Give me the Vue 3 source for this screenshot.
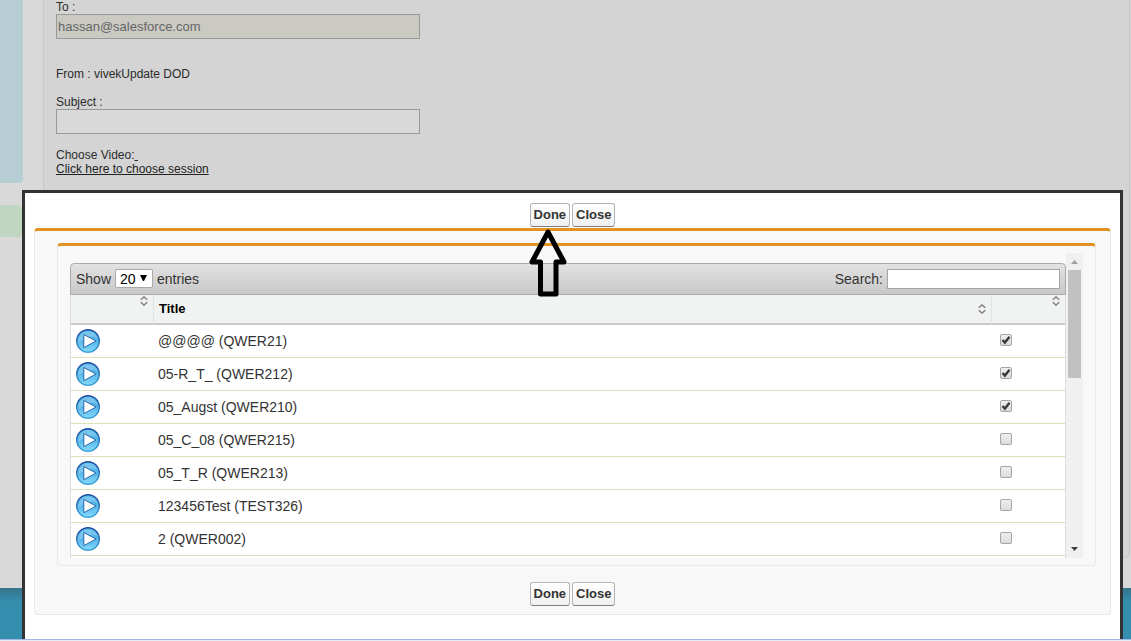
<script setup>
import { ref } from 'vue'

const email = ref('hassan@salesforce.com')
const subject = ref('')
const search = ref('')
const pageSize = ref('20')
const sessions = ref([
  { title: '@@@@ (QWER21)', selected: true },
  { title: '05-R_T_ (QWER212)', selected: true },
  { title: '05_Augst (QWER210)', selected: true },
  { title: '05_C_08 (QWER215)', selected: false },
  { title: '05_T_R (QWER213)', selected: false },
  { title: '123456Test (TEST326)', selected: false },
  { title: '2 (QWER002)', selected: false }
])
</script>

<template>
  <div class="page">
    <div class="columns">
      <aside class="side">
        <div class="side-box blue"></div>
        <div class="side-box green"></div>
      </aside>
      <main class="card">
        <div class="field">
          <label for="to">To :</label>
          <input id="to" v-model="email" class="filled" type="text" readonly />
        </div>
        <p class="from">From : vivekUpdate DOD</p>
        <div class="field">
          <label for="subject">Subject :</label>
          <input id="subject" v-model="subject" type="text" />
        </div>
        <p class="choose">Choose Video:<a href="#">&nbsp;<br />Click here to choose session</a></p>
      </main>
    </div>
    <footer class="footer"></footer>

    <section class="modal" role="dialog" aria-label="Choose session">
      <div class="actions top">
        <button type="button">Done</button>
        <button type="button">Close</button>
      </div>
      <div class="panel outer">
        <div class="panel inner">
          <div class="scroller">
            <div class="grid">
              <div class="toolbar">
                <label class="length">
                  Show
                  <span class="select">
                    <select v-model="pageSize">
                      <option>20</option>
                      <option>50</option>
                    </select>
                    <svg viewBox="0 0 7 6" width="7" height="6"><path d="M0 0h7L4 6H3z" fill="#000" /></svg>
                  </span>
                  entries
                </label>
                <label class="search">Search: <input v-model="search" type="text" /></label>
              </div>
              <table>
                <colgroup>
                  <col class="c-play" />
                  <col />
                  <col class="c-check" />
                </colgroup>
                <thead>
                  <tr>
                    <th v-for="(name, i) in ['', 'Title', '']" :key="i">
                      <div class="head" :class="{ raised: !name }">
                        <span>{{ name }}</span>
                        <svg viewBox="0 0 8 10" width="8" height="10" fill="none" stroke="#858585" stroke-width="1.5">
                          <path d="M.7 3.8L4 .9l3.300 2.900M.7 6.200L4 9.100l3.300-2.900" />
                        </svg>
                      </div>
                    </th>
                  </tr>
                </thead>
                <tbody>
                  <tr v-for="row in sessions" :key="row.title">
                    <td>
                      <button class="play" type="button" :aria-label="'Play ' + row.title">
                        <svg viewBox="0 0 24 24" width="24" height="24">
                          <defs>
                            <linearGradient id="disc" x1="0" y1="0" x2="0" y2="1">
                              <stop offset="0" stop-color="#5bb5e6" />
                              <stop offset=".5" stop-color="#55b4e6" />
                              <stop offset="1" stop-color="#86dcfb" />
                            </linearGradient>
                            <linearGradient id="rim" x1="0" y1="0" x2="0" y2="1">
                              <stop offset="0" stop-color="#1c4b9c" />
                              <stop offset="1" stop-color="#3fa5dc" />
                            </linearGradient>
                          </defs>
                          <circle cx="12" cy="12" r="11.300" fill="url(#disc)" stroke="url(#rim)" stroke-width="1.400" />
                          <path d="M2.500 10C4 5 8 2.500 12 2.500S20 5 21.500 9C16 6 9 8 2.500 14z" fill="#8fd0f2" opacity=".6" />
                          <path d="M7.800 5.500v13.200L20 12z" fill="#fff" stroke="#2468ae" stroke-width="1" stroke-linejoin="round" />
                        </svg>
                      </button>
                    </td>
                    <td>{{ row.title }}</td>
                    <td>
                      <span class="check">
                        <input v-model="row.selected" type="checkbox" :aria-label="row.title" />
                        <svg v-if="row.selected" viewBox="0 0 12 12" width="12" height="12">
                          <path d="M2.500 6l2.400 2.600 4.600-5.800" fill="none" stroke="#3c3c3c" stroke-width="2.400" />
                        </svg>
                      </span>
                    </td>
                  </tr>
                </tbody>
              </table>
            </div>
            <div class="track" aria-hidden="true">
              <svg viewBox="0 0 7 4" width="7" height="4"><path d="M0 4L3.500 0 7 4z" fill="#a0a0a0" /></svg>
              <div class="thumb"></div>
              <svg class="down" viewBox="0 0 7 4" width="7" height="4"><path d="M0 0h7L3.500 4z" fill="#404040" /></svg>
            </div>
          </div>
        </div>
        <div class="actions bottom">
          <button type="button">Done</button>
          <button type="button">Close</button>
        </div>
      </div>
      <svg class="pointer" viewBox="0 0 38 68" width="38" height="68" fill="none" stroke="#000" stroke-width="5" stroke-linejoin="round">
        <path d="M19 3L3 33h8.500v32h15.500V33h8z" />
      </svg>
    </section>
    <div class="edge"></div>
  </div>
</template>

<style>
body {
  margin: 0;
}
</style>

<style scoped>
.page {
  position: relative;
  display: flex;
  flex-direction: column;
  min-height: 100vh;
  overflow: hidden;
  background: #d9d9d9;
  color: #2b2b2b;
  font: 12px/14px "Liberation Sans", Arial, sans-serif;
}
.page * {
  box-sizing: border-box;
}
.columns {
  display: flex;
  flex: 1;
  gap: 20px;
  padding: 0 1px 30px 0;
}
.side {
  width: 23px;
}
.side-box.blue {
  height: 183px;
  background: #b7cdd4;
  border-radius: 0 0 4px 0;
}
.side-box.green {
  height: 32px;
  margin: 22px 1px 0 0;
  background: #c0d6c0;
  border-radius: 0 4px 4px 0;
}
.card {
  flex: 1;
  border: 1px solid #c8c8c8;
  border-top: 0;
  border-radius: 0 0 5px 5px;
  background: #d4d4d4;
  padding-left: 12px;
}
.field label {
  display: block;
}
.field input {
  display: block;
  width: 364px;
  height: 25px;
  padding: 0 1px;
  border: 1px solid #999;
  background: #d9d9d9;
  color: #666;
  font: 13px "Liberation Sans", Arial, sans-serif;
}
.field .filled {
  background: #cacac3;
}
.from {
  margin: 28px 0 14px;
}
.choose {
  margin: 14px 0 0;
}
.choose a {
  color: #222;
}
.footer {
  height: 53px;
  background: linear-gradient(#34748b, #368eae 14px);
}
.modal {
  position: absolute;
  inset: 190px 8px 2px 22px;
  border: 3px solid #333;
  border-bottom: 0;
  background: #fff;
  padding: 10px 9px 0;
}
.actions {
  display: flex;
  justify-content: center;
  gap: 2px;
}
.actions button {
  height: 24px;
  padding: 0 3px 2px;
  border: 1px solid #b5b5b5;
  border-bottom-color: #7f7f7f;
  border-radius: 3px;
  background: linear-gradient(#fff, #f0f0f0);
  color: #333;
  font: bold 13px "Liberation Sans", Arial, sans-serif;
}
.bottom {
  margin-top: 16px;
  padding-right: 8px;
}
.panel {
  border: 1px solid #e8e8e8;
  border-top: 3px solid #e29321;
  border-radius: 4px;
  background: #f8f8f8;
}
.outer {
  margin-top: 1px;
  padding: 12px 14px 8px 22px;
}
.inner {
  padding: 7px 12px;
}
.scroller {
  display: grid;
  grid-template-columns: 1fr 17px;
}
.grid {
  padding-top: 10px;
}
.toolbar {
  display: flex;
  justify-content: space-between;
  align-items: center;
  height: 32px;
  padding: 0 5px;
  border: 1px solid #aaa;
  border-radius: 4px 4px 0 0;
  background: linear-gradient(#e2e2e2, #c8c8c8);
  color: #333;
  font-size: 14px;
  line-height: 16px;
}
.toolbar label {
  display: flex;
  align-items: center;
  gap: 4px;
  padding-bottom: 1px;
}
.select {
  position: relative;
}
.select select {
  display: block;
  appearance: none;
  width: 38px;
  height: 19px;
  padding: 0 4px;
  border: 1px solid #a9a9a9;
  border-radius: 2px;
  background: #fff;
  color: #000;
  font: 14px "Liberation Sans", Arial, sans-serif;
}
.select svg {
  position: absolute;
  right: 6px;
  top: 6px;
  pointer-events: none;
}
.search input {
  width: 173px;
  height: 20px;
  padding: 1px 2px;
  border: 1px solid #a5a5a5;
  background: #fff;
  font: 13px "Liberation Sans", Arial, sans-serif;
}
table {
  width: 100%;
  table-layout: fixed;
  border-collapse: separate;
  border-spacing: 0;
  border: 1px solid #dcdfe0;
  border-width: 0 1px;
  padding-bottom: 2px;
  background: #fff;
  color: #333;
  font-size: 14px;
  line-height: 16px;
}
.c-play {
  width: 83px;
}
.c-check {
  width: 73px;
}
th {
  height: 30px;
  padding: 0 5px;
  border-bottom: 2px solid #c9cbcb;
  border-right: 1px solid #e0e3e3;
  background: #f1f3f3;
  color: #000;
  font-size: 13px;
  text-align: left;
}
th:last-child {
  border-right: 0;
}
.head {
  display: flex;
  justify-content: space-between;
  align-items: center;
}
.head.raised {
  height: 28px;
  align-items: flex-start;
}
.raised svg {
  margin-top: 1px;
}
td {
  height: 33px;
  padding: 0 4px;
  border-bottom: 1px solid #e0dcb8;
}
td:first-child {
  padding-left: 5px;
}
td:last-child {
  padding: 0 8px 2px;
}
.play {
  display: block;
  padding: 0;
  border: 0;
  background: none;
}
.play svg {
  display: block;
}
.check {
  position: relative;
  display: block;
  width: 12px;
  height: 12px;
}
.check input {
  display: block;
  appearance: none;
  width: 12px;
  height: 12px;
  margin: 0;
  border: 1px solid #a5a5a5;
  border-radius: 2px;
  background: linear-gradient(#efefef, #dcdcdc);
}
.check svg {
  position: absolute;
  inset: 0;
  pointer-events: none;
}
.track {
  display: flex;
  flex-direction: column;
  align-items: center;
  padding: 7px 2px;
  background: #f0f0f0;
}
.thumb {
  width: 13px;
  height: 108px;
  margin-top: 6px;
  background: #c1c1c1;
}
.down {
  margin-top: auto;
}
.pointer {
  position: absolute;
  left: 504px;
  top: 36px;
}
.edge {
  position: absolute;
  inset: auto 0 0;
  height: 2px;
  border-top: 1px solid #a0b8e6;
  background: #e6ecf6;
}
</style>
